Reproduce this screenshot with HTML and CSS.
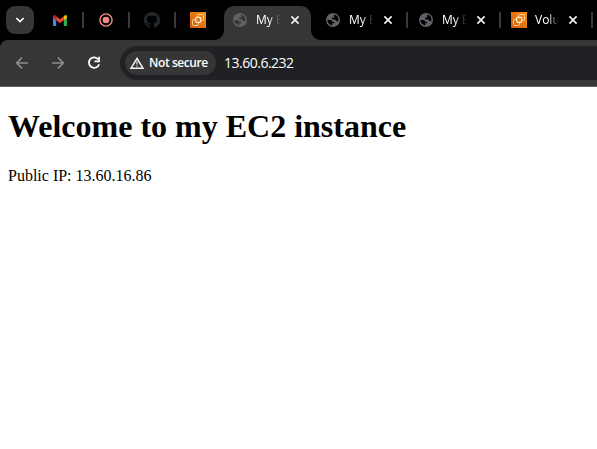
FILE: index.html
```html
<!DOCTYPE html>
<html lang="en">
<head>
<meta charset="utf-8">
<title>My EC2 instance</title>
<link rel="stylesheet" href="styles.css">
</head>
<body>
<svg class="defs" width="0" height="0" aria-hidden="true">
  <defs>
    <linearGradient id="aws" x1="0" y1="1" x2="1" y2="0"><stop offset="0" stop-color="#cf5712"/><stop offset="1" stop-color="#f79410"/></linearGradient>
    <symbol id="globe" viewBox="0 0 14 14">
      <circle cx="7" cy="7" r="7" fill="#5f6368"/>
      <path d="M1.4 7.1H4.3Q6.2 7.1 6.3 8.9H8.2V10.2H6.3V12.4Q3 12 1.8 9.2ZM8.2 1.6 11 2.8 12.4 5.6 12.2 8.2H10.6Q10.2 6.6 8.4 6.6H6.2V4.4H8.2Z" fill="var(--hole)"/>
    </symbol>
    <symbol id="ec2" viewBox="0 0 16 16">
      <path d="M0 0H16V16H0Z" fill="url(#aws)"/>
      <g fill="none" stroke="#ffd9ae" stroke-width=".9"><rect x="5.7" y="5.3" width="5" height="5" rx="1" stroke="#fff0df" stroke-width="1.2"/><path d="M7.5 5V3.5Q7.5 2.5 8.5 2.5H12.5Q13.5 2.5 13.5 3.5V7.5Q13.5 8.5 12.5 8.5H11M5 7.5H3.5Q2.5 7.5 2.5 8.5V12.5Q2.5 13.5 3.5 13.5H7.5Q8.5 13.5 8.5 12.5V11"/></g>
    </symbol>
    <symbol id="close" viewBox="0 0 10 10"><path d="M1.4 1.4 8.6 8.6M8.6 1.4 1.4 8.6" fill="none" stroke="#f1f1f1" stroke-width="1.7"/></symbol>
  </defs>
</svg>
<header class="browser">
  <div class="tabstrip">
    <div class="search-tabs"><svg width="10" height="6" viewBox="0 0 10 6"><path d="M1.3 1 5 4.6 8.7 1" fill="none" stroke="#fff" stroke-width="1.7"/></svg></div>
    <div class="pinned first sep">
      <svg width="14" height="11" viewBox="0 0 14 11"><path d="M0 1.5V10Q0 11 1 11H3.2V3Z" fill="#4285f4"/><path d="M10.8 3V11H13Q14 11 14 10V1.5Z" fill="#34a853"/><path d="M0 2.7V1.5Q0 0 1.3 0 2 0 3.2 1.2V5.2Z" fill="#c5221f"/><path d="M3.2 1.2 7 4.2 10.8 1.2V5.2L7 8.1 3.2 5.2Z" fill="#ea4335"/><path d="M10.8 1.2Q12 0 12.7 0 14 0 14 1.5V2.7L10.8 5.2Z" fill="#fbbc04"/></svg>
    </div>
    <div class="pinned sep"><svg width="14" height="14" viewBox="0 0 14 14"><circle cx="7" cy="7" r="6.1" fill="none" stroke="#f28b82" stroke-width="1.4"/><circle cx="7" cy="7" r="3.3" fill="#f28b82"/></svg></div>
    <div class="pinned sep"><svg width="16" height="16" viewBox="0 0 16 16"><path fill="#24292e" d="M8 0C3.58 0 0 3.58 0 8c0 3.54 2.29 6.53 5.47 7.59.4.07.55-.17.55-.38 0-.19-.01-.82-.01-1.49-2.01.37-2.53-.49-2.69-.94-.09-.23-.48-.94-.82-1.13-.28-.15-.68-.52-.01-.53.63-.01 1.08.58 1.23.82.72 1.21 1.87.87 2.33.66.07-.52.28-.87.51-1.07-1.78-.2-3.64-.89-3.64-3.95 0-.87.31-1.59.82-2.15-.08-.2-.36-1.02.08-2.12 0 0 .67-.21 2.2.82.64-.18 1.32-.27 2-.27s1.36.09 2 .27c1.53-1.04 2.2-.82 2.2-.82.44 1.1.16 1.92.08 2.12.51.56.82 1.27.82 2.15 0 3.07-1.87 3.75-3.65 3.95.29.25.54.73.54 1.48 0 1.07-.01 1.93-.01 2.2 0 .21.15.46.55.38A8.01 8.01 0 0 0 16 8c0-4.42-3.58-8-8-8Z"/></svg></div>
    <div class="pinned"><svg width="16" height="16"><use href="#ec2"/></svg></div>
    <div class="tab active"><svg class="icon" width="14" height="14"><use href="#globe"/></svg><span class="title">My E</span><svg class="close" width="10" height="10"><use href="#close"/></svg></div>
    <div class="tab sep"><svg class="icon" width="14" height="14"><use href="#globe"/></svg><span class="title">My E</span><svg class="close" width="10" height="10"><use href="#close"/></svg></div>
    <div class="tab sep"><svg class="icon" width="14" height="14"><use href="#globe"/></svg><span class="title">My E</span><svg class="close" width="10" height="10"><use href="#close"/></svg></div>
    <div class="tab volumes sep"><svg class="icon" width="16" height="16"><use href="#ec2"/></svg><span class="title">Volu</span><svg class="close" width="10" height="10"><use href="#close"/></svg></div>
  </div>
  <div class="toolbar">
    <svg class="nav" width="14" height="14" viewBox="0 0 14 14"><path d="M13 7H2M7 1.7 1.7 7 7 12.3" fill="none" stroke="#8c8c8c" stroke-width="1.7"/></svg>
    <svg class="nav" width="14" height="14" viewBox="0 0 14 14"><path d="M1 7H12M7 1.7 12.3 7 7 12.3" fill="none" stroke="#8c8c8c" stroke-width="1.7"/></svg>
    <svg class="nav" width="14" height="14" viewBox="0 0 14 14"><path d="M11.3 3.5A5.2 5.2 0 1 0 12.1 8.2" fill="none" stroke="#fff" stroke-width="1.8"/><path d="M12.1.7V5.4H7.5" fill="none" stroke="#fff" stroke-width="1.7"/></svg>
    <div class="omnibox">
      <div class="chip"><svg width="14" height="12" viewBox="0 0 14 12"><path d="M7 1.5 13 11.2H1Z" fill="none" stroke="#f4f4f4" stroke-width="1.5"/><path d="M7 4.6V7.5M7 8.4V9.8" stroke="#ddd" stroke-width="1.3"/></svg><span>Not secure</span></div>
      <span class="url">13.60.6.232</span>
    </div>
  </div>
</header>
<main class="page">
  <h1>Welcome to my EC2 instance</h1>
  <p>Public IP: 13.60.16.86</p>
</main>
</body>
</html>
```

FILE: styles.css
```css
* { box-sizing: border-box; }
html { background: #fff; overflow: hidden; }
body { margin: 0; overflow: hidden; }
svg { display: block; flex: none; }
.defs { position: absolute; }

.browser { background: #000; color: #fff; font-family: "Open Sans", "Noto Sans", sans-serif; }
.tabstrip {
  display: flex;
  align-items: center;
  height: 40px;
  padding-left: 6px;
}
.search-tabs {
  display: flex;
  flex: none;
  align-items: center;
  justify-content: center;
  width: 28px;
  height: 28px;
  border-radius: 9px;
  background: #363636;
}
.pinned {
  display: flex;
  flex: none;
  align-items: center;
  justify-content: center;
  width: 46px;
  height: 16px;
  padding-right: 2px;
}
.pinned.first { width: 50px; padding: 0 0 0 2px; }
.sep {
  background: linear-gradient(#3a3a3a, #3a3a3a) right center / 2px 16px no-repeat;
}
.tab {
  --hole: #000;
  display: flex;
  flex: none;
  align-items: center;
  width: 93px;
  height: 28px;
  padding-left: 11px;
}
.tab.active {
  --hole: #363636;
  position: relative;
  align-self: flex-end;
  width: 87px;
  height: 34px;
  margin: 0 4px 0 2px;
  padding: 0 0 6px 9px;
  border-radius: 10px 10px 0 0;
  background: #363636;
}
.tab.active::before,
.tab.active::after {
  content: "";
  position: absolute;
  bottom: 0;
  width: 10px;
  height: 10px;
}
.tab.active::before {
  left: -10px;
  background: radial-gradient(circle at 0 0, transparent 9.5px, #363636 10.5px);
}
.tab.active::after {
  right: -10px;
  background: radial-gradient(circle at 100% 0, transparent 9.5px, #363636 10.5px);
}
.title {
  flex: none;
  width: 26px;
  margin-left: 9px;
  font-size: 12px;
  line-height: 18px;
  white-space: nowrap;
  -webkit-mask-image: linear-gradient(90deg, #000 13px, transparent 24px);
  mask-image: linear-gradient(90deg, #000 13px, transparent 24px);
}
.close { margin-left: 8px; }
.volumes { width: 92px; padding-left: 10px; }
.volumes .title { margin-left: 8px; }
.volumes .close { margin-left: 7px; }

.toolbar {
  display: flex;
  align-items: center;
  height: 47px;
  padding-left: 15px;
  border-bottom: 1px solid #626262;
  border-radius: 8px 0 0 0;
  background: #363636;
}
.nav { margin-right: 22px; }
.nav:nth-of-type(3) { margin-right: 19px; }
.omnibox {
  display: flex;
  flex: 1;
  align-items: center;
  height: 34px;
  padding-left: 5px;
  border-radius: 17px 0 0 17px;
  background: #202124;
}
.chip {
  display: flex;
  align-items: center;
  width: 91px;
  height: 24px;
  padding-left: 5px;
  border-radius: 12px;
  background: #363636;
  font-size: 12px;
  font-weight: 600;
  line-height: 16px;
  white-space: nowrap;
}
.chip span { margin-left: 5px; letter-spacing: -0.42px; }
.url { margin-left: 8px; padding-bottom: 1px; font-size: 14px; letter-spacing: -0.5px; }

.page { padding: 0 8px; color: #000; font-family: "Liberation Serif", serif; font-size: 16px; }
.page h1 { margin: 0; padding-top: 21px; font-size: 32px; line-height: 37px; }
.page p { margin: 22px 0 0; line-height: 18px; }
```
